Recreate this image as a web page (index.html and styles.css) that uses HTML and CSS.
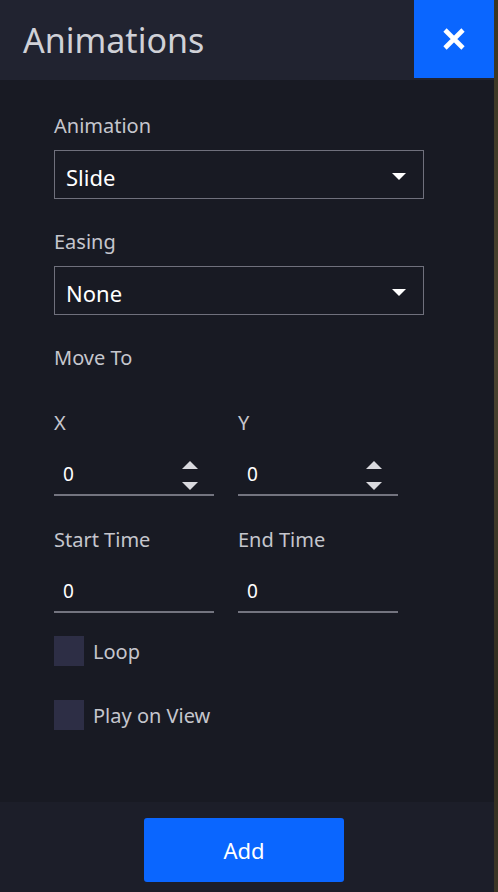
FILE: index.html
```html
<!DOCTYPE html>
<html lang="en">
<head>
  <meta charset="UTF-8" />
  <title>Animations</title>
  <link rel="stylesheet" href="styles.css">
</head>
<body>

  <div class="panel">
    <header>
      <h1>Animations</h1>
      <button class="close-btn" aria-label="Close">
        <svg width="24" height="24" viewBox="0 0 24 24">
          <path d="M3 3 L21 21 M21 3 L3 21" stroke="#fff" stroke-width="4.6" fill="none"/>
        </svg>
      </button>
    </header>

    <div class="content">
      <div class="field">
        <label>Animation</label>
        <div class="select">
          <span>Slide</span>
          <i class="caret"></i>
        </div>
      </div>

      <div class="field">
        <label>Easing</label>
        <div class="select">
          <span>None</span>
          <i class="caret"></i>
        </div>
      </div>

      <div class="section-title">Move To</div>

      <div class="row xy">
        <div class="col">
          <label>X</label>
          <div class="num">
            <span>0</span>
            <div class="spin"><i class="up"></i><i class="down"></i></div>
          </div>
        </div>
        <div class="col">
          <label>Y</label>
          <div class="num">
            <span>0</span>
            <div class="spin"><i class="up"></i><i class="down"></i></div>
          </div>
        </div>
      </div>

      <div class="row times">
        <div class="col">
          <label>Start Time</label>
          <div class="num"><span>0</span></div>
        </div>
        <div class="col">
          <label>End Time</label>
          <div class="num"><span>0</span></div>
        </div>
      </div>

      <div class="check first"><span class="box"></span>Loop</div>
      <div class="check"><span class="box"></span>Play on View</div>
    </div>

    <footer>
      <button class="add-btn">Add</button>
    </footer>
  </div>

</body>
</html>
```

FILE: styles.css
```css
body {
  margin: 0;
  font-family: "Segoe UI", "Noto Sans", sans-serif;
  background: linear-gradient(180deg, #3a3522, #4a4330 40%, #2f2b1e 80%, #3c3626);
  height: 892px;
  overflow: hidden;
}

.panel {
  width: 494px;
  height: 892px;
  display: flex;
  flex-direction: column;
  background: #181a23;
}

header {
  height: 80px;
  background: #212330;
  display: flex;
  justify-content: space-between;
  align-items: flex-start;
}
header h1 {
  margin: 0;
  padding-left: 23px;
  line-height: 80px;
  font-size: 34px;
  font-weight: normal;
  color: #d0d1d7;
}
.close-btn {
  width: 80px;
  height: 78px;
  border: none;
  background: #0a66ff;
  display: flex;
  align-items: center;
  justify-content: center;
  padding: 0;
  cursor: pointer;
}

.content {
  flex: 1;
  padding: 30px 70px 0 54px;
}

label, .section-title {
  display: block;
  font-size: 20px;
  line-height: 28px;
  color: #c5c6cd;
}

.field { margin-bottom: 27px; }
.field label { padding-top: 2px; margin-bottom: 10px; }
.section-title { padding-top: 2px; margin-bottom: -2px; }

.select {
  height: 49px;
  box-sizing: border-box;
  border: 1px solid #6f707c;
  display: flex;
  align-items: center;
  justify-content: space-between;
  padding: 4px 17px 0 11px;
  color: #fff;
  font-size: 22px;
}
.caret {
  width: 0;
  height: 0;
  border-left: 7px solid transparent;
  border-right: 7px solid transparent;
  border-top: 7px solid #fff;
  margin-top: 0;
}

.row {
  display: flex;
  gap: 24px;
}
.row .col { width: 160px; }
.xy { margin-top: 39px; }
.times { margin-top: 30px; }

.num {
  margin-top: 17px;
  height: 42px;
  box-sizing: border-box;
  border-bottom: 2px solid #73747f;
  display: flex;
  align-items: center;
  justify-content: space-between;
  padding: 0 16px 0 9px;
  color: #fff;
  font-size: 19px;
}
.spin {
  display: flex;
  flex-direction: column;
  gap: 13px;
  padding-top: 2px;
}
.spin i {
  width: 0;
  height: 0;
  border-left: 8px solid transparent;
  border-right: 8px solid transparent;
}
.spin .up { border-bottom: 8px solid #d9d9de; }
.spin .down { border-top: 8px solid #d9d9de; }

.check {
  display: flex;
  align-items: center;
  gap: 9px;
  font-size: 20px;
  color: #c5c6cd;
  margin-top: 34px;
}
.check.first { margin-top: 23px; }
.check .box {
  width: 30px;
  height: 30px;
  background: #2d2e45;
}

footer {
  height: 90px;
  background: #1c1e29;
  display: flex;
  justify-content: center;
  align-items: flex-start;
  padding-right: 6px;
}
.add-btn {
  margin-top: 16px;
  width: 200px;
  height: 64px;
  border: none;
  border-radius: 3px;
  background: #0a66ff;
  color: #fff;
  font-family: inherit;
  font-size: 22px;
  cursor: pointer;
}
```
